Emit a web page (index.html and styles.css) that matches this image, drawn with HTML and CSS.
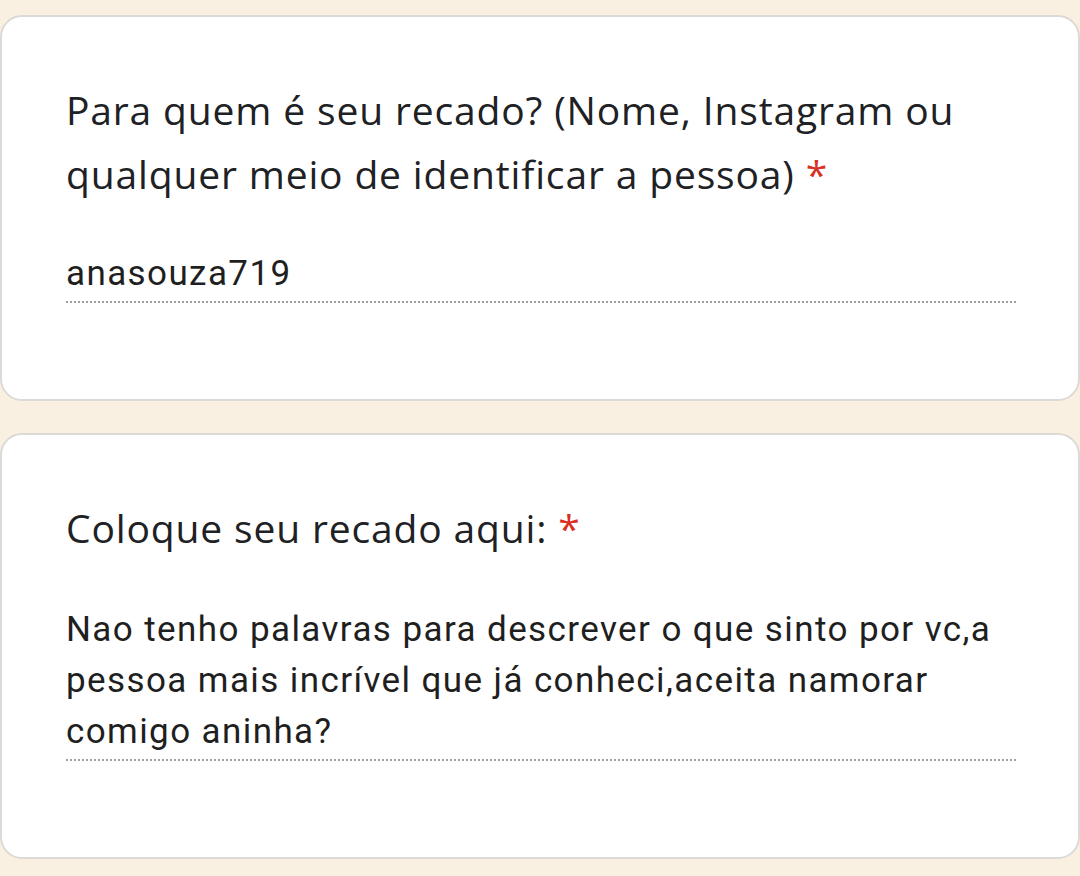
FILE: index.html
```html
<!DOCTYPE html>
<html lang="pt">
<head>
<meta charset="utf-8">
<title>Recado</title>
<link rel="stylesheet" href="styles.css">
</head>
<body>
<main class="page">
  <section class="card card-first">
    <h2 class="question">Para quem é seu recado? (Nome, Instagram ou qualquer meio de identificar a pessoa) <span class="req">*</span></h2>
    <div class="answer answer-short">anasouza719</div>
  </section>
  <section class="card card-second">
    <h2 class="question">Coloque seu recado aqui: <span class="req">*</span></h2>
    <div class="answer answer-long">Nao tenho palavras para descrever o que sinto por vc,a pessoa mais incrível que já conheci,aceita namorar comigo aninha?</div>
  </section>
</main>
</body>
</html>
```

FILE: styles.css
```css
html, body {
  margin: 0;
  padding: 0;
  background: #faf0e2;
}

.page {
  padding-top: 15px;
  display: flex;
  flex-direction: column;
  gap: 32px;
}

.card {
  background: #ffffff;
  border: 2px solid #dcdad6;
  border-radius: 22px;
  width: 1080px;
  box-sizing: border-box;
  padding: 61px 62px 0 64px;
}

.card-first { height: 386px; }
.card-second { height: 426px; }

.question {
  margin: 0;
  font-family: "Open Sans", "Liberation Sans", sans-serif;
  font-weight: 400;
  font-size: 39px;
  line-height: 64px;
  color: #202124;
  letter-spacing: 0.85px;
}

.req {
  color: #d93025;
}

.answer {
  font-family: Roboto, "Liberation Sans", sans-serif;
  color: #1f1f1f;
  border-bottom: 2px dotted #9e9e9e;
  font-size: 35px;
  letter-spacing: 1.4px;
}

.answer-short {
  margin-top: 48px;
  line-height: 40px;
  padding-bottom: 7px;
}

.card-second .question {
  margin-top: 0;
}

.answer-long {
  margin-top: 44px;
  line-height: 51px;
  padding-bottom: 2px;
}
```
